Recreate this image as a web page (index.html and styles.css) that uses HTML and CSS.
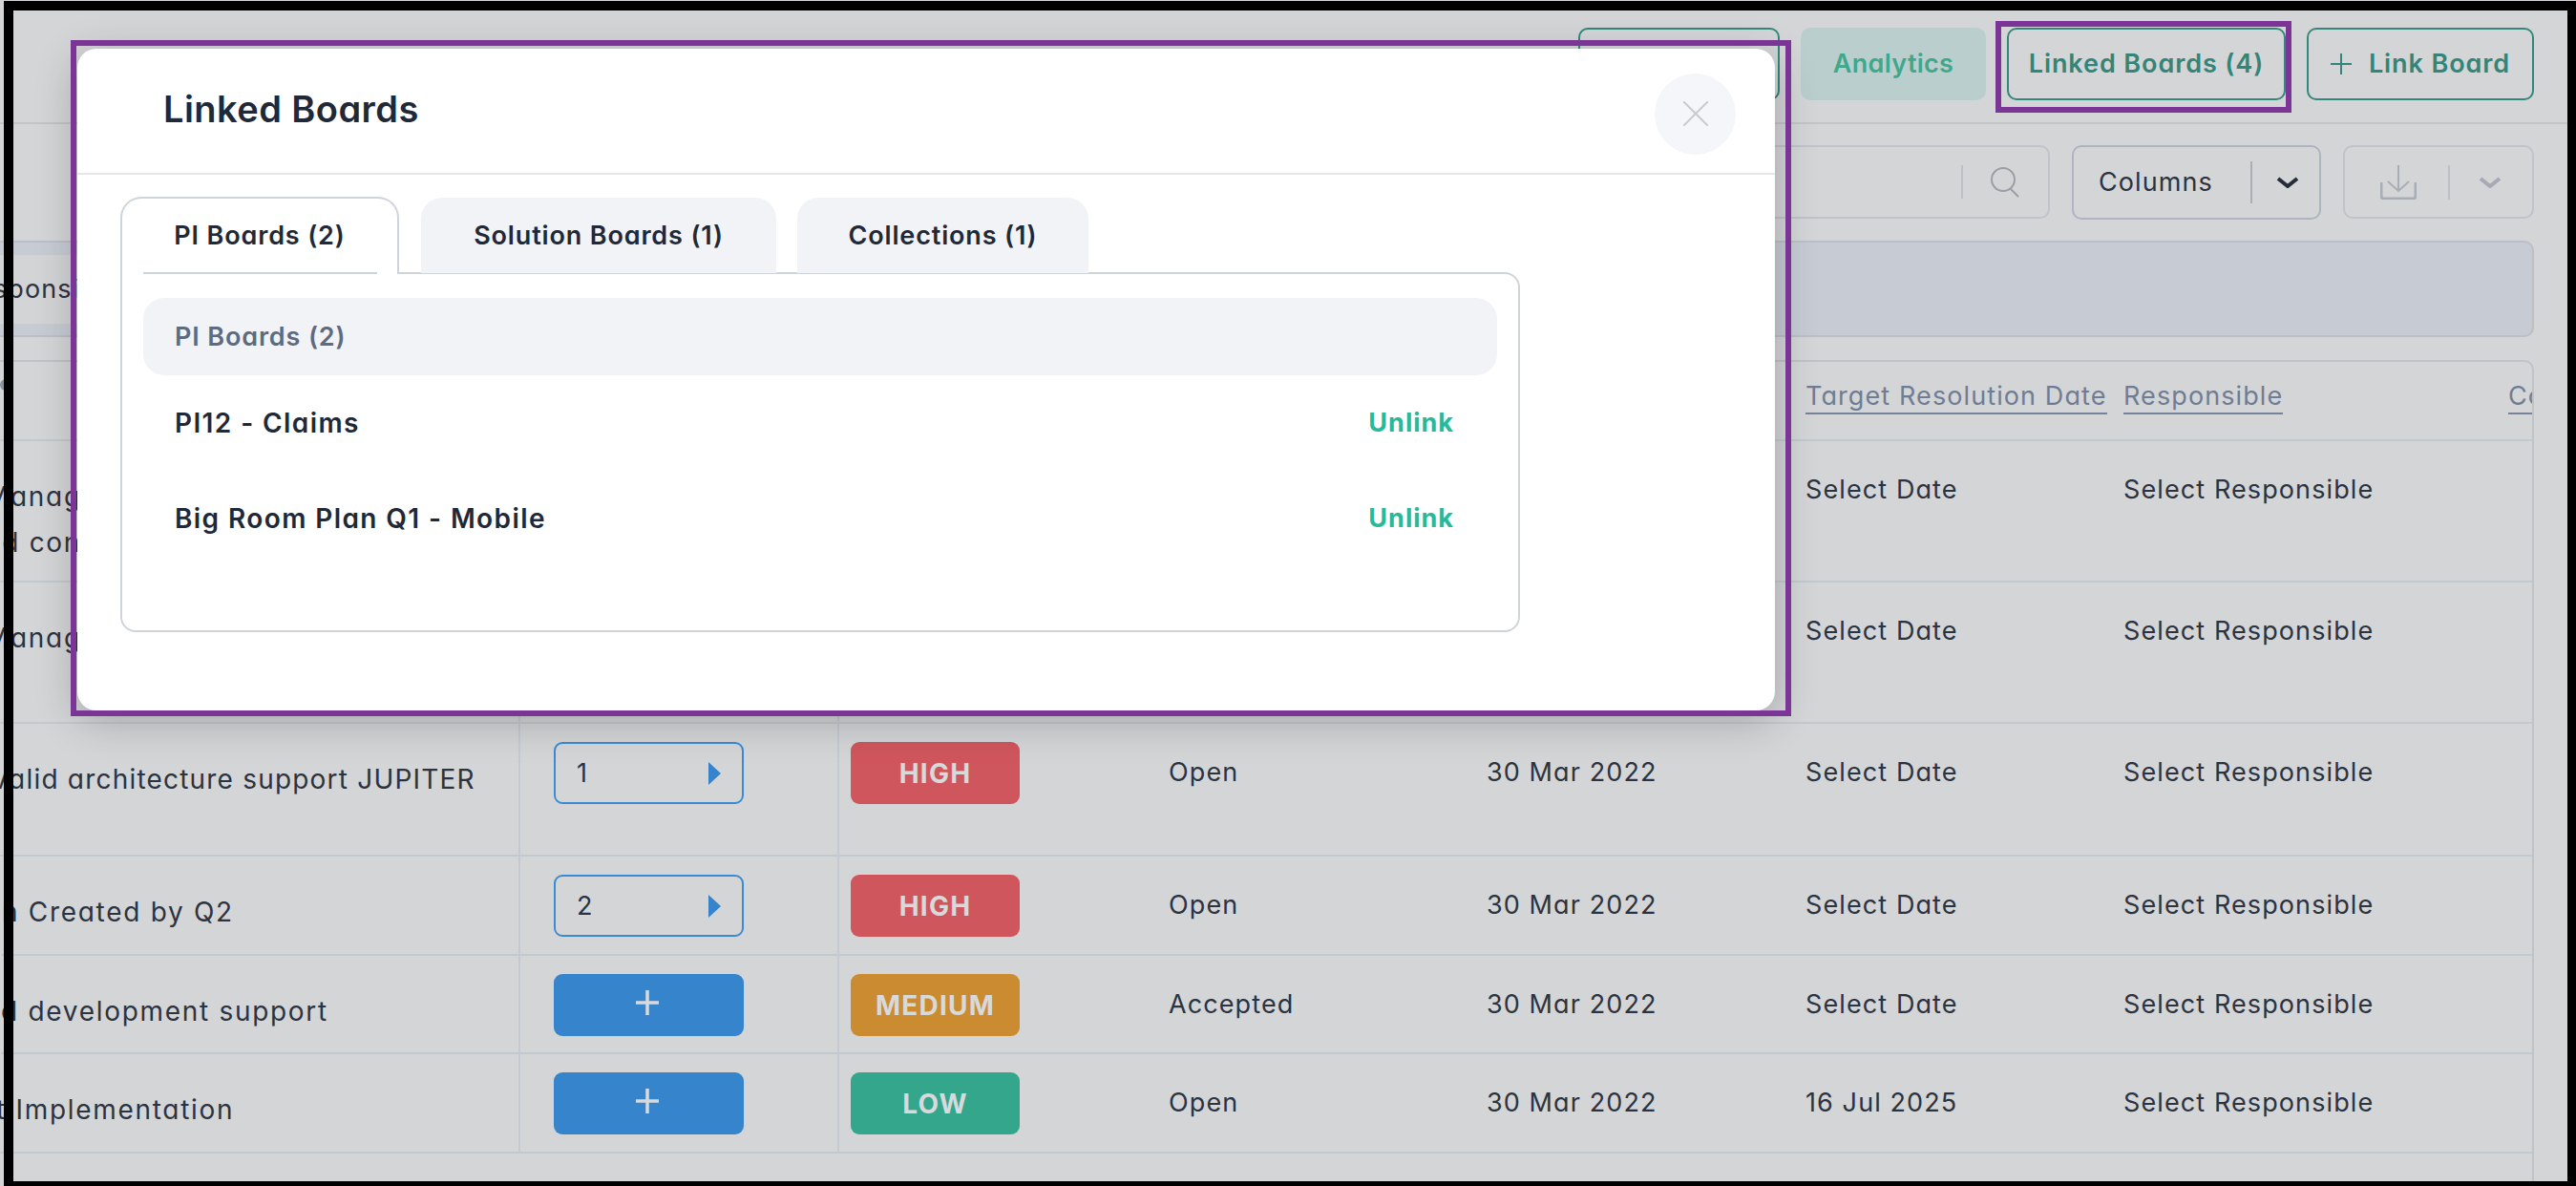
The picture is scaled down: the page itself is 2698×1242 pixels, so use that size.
FILE: index.html
```html
<!DOCTYPE html>
<html lang="en">
<head>
<meta charset="utf-8">
<title>Linked Boards</title>
<link rel="stylesheet" href="styles.css">
</head>
<body>
<div class="page">
  <header class="topbar">
    <button class="btn btn-outline btn-plan">Board View</button>
    <button class="btn btn-soft">Analytics</button>
    <button class="btn btn-outline btn-linked">Linked Boards (4)</button>
    <button class="btn btn-outline btn-link"><svg class="plus-icon" viewBox="0 0 22 22"><path d="M11 0v22M0 11h22"/></svg>Link Board</button>
  </header>

  <div class="toolbar">
    <div class="tool search">
      <span class="tool-sep search-sep"></span>
      <svg class="search-icon" viewBox="0 0 34 32"><circle cx="14" cy="13" r="12"/><path d="M22 23l8 8"/></svg>
    </div>
    <div class="tool columns">
      <span class="columns-label">Columns</span>
      <span class="tool-sep columns-sep"></span>
      <svg class="chev chev-dark" viewBox="0 0 24 12"><path d="M2 2l10 8 10-8"/></svg>
    </div>
    <div class="tool export">
      <svg class="export-icon" viewBox="0 0 38 36"><path d="M19 0v27M8 17l11 10 11-10"/><path class="tray" d="M1 18v14q0 3 3 3h30q3 0 3-3V18"/></svg>
      <span class="tool-sep export-sep"></span>
      <svg class="chev chev-grey" viewBox="0 0 24 12"><path d="M2 2l10 8 10-8"/></svg>
    </div>
  </div>

  <div class="filterbar"><span class="chip">Responsible</span></div>

  <section class="table">
    <div class="th"><span class="dot"></span></div><div class="th"></div><div class="th"></div><div class="th"></div><div class="th"></div>
    <div class="th"><a class="sort">Target Resolution Date</a></div><div class="th"><a class="sort">Responsible</a></div><div class="th clip"><a class="sort">Comments</a></div>

    <div class="td first r1">Manage<br>nd controls</div><div class="td ctl"></div><div class="td ctl"></div><div class="td"></div><div class="td"></div><div class="td">Select Date</div><div class="td">Select Responsible</div><div class="td"></div>

    <div class="td first r2">Manage</div><div class="td ctl"></div><div class="td ctl"></div><div class="td"></div><div class="td"></div><div class="td">Select Date</div><div class="td">Select Responsible</div><div class="td"></div>

    <div class="td first r3">Valid architecture support JUPITER</div>
    <div class="td ctl"><div class="step"><span>1</span><i class="tri"></i></div></div>
    <div class="td ctl"><div class="badge high">HIGH</div></div>
    <div class="td">Open</div><div class="td">30 Mar 2022</div><div class="td">Select Date</div><div class="td">Select Responsible</div><div class="td"></div>

    <div class="td first r4">n Created by Q2</div>
    <div class="td ctl"><div class="step"><span>2</span><i class="tri"></i></div></div>
    <div class="td ctl"><div class="badge high">HIGH</div></div>
    <div class="td">Open</div><div class="td">30 Mar 2022</div><div class="td">Select Date</div><div class="td">Select Responsible</div><div class="td"></div>

    <div class="td first r5">d development support</div>
    <div class="td ctl"><div class="add"><svg class="add-icon" viewBox="0 0 24 26"><path d="M12 0v26M0 13h24"/></svg></div></div>
    <div class="td ctl"><div class="badge medium">MEDIUM</div></div>
    <div class="td">Accepted</div><div class="td">30 Mar 2022</div><div class="td">Select Date</div><div class="td">Select Responsible</div><div class="td"></div>

    <div class="td first r6">t Implementation</div>
    <div class="td ctl"><div class="add"><svg class="add-icon" viewBox="0 0 24 26"><path d="M12 0v26M0 13h24"/></svg></div></div>
    <div class="td ctl"><div class="badge low">LOW</div></div>
    <div class="td">Open</div><div class="td">30 Mar 2022</div><div class="td">16 Jul 2025</div><div class="td">Select Responsible</div><div class="td"></div>
  </section>

  <div class="modal">
    <div class="modal-head">
      <h2 class="modal-title">Linked Boards</h2>
      <button class="close" aria-label="Close"><svg viewBox="0 0 26 26"><path d="M0 0l26 26M26 0L0 26"/></svg></button>
    </div>
    <div class="modal-body">
      <div class="tabs">
        <div class="tab tab-active">PI Boards (2)</div>
        <div class="tab tab-solution">Solution Boards (1)</div>
        <div class="tab tab-collections">Collections (1)</div>
      </div>
      <div class="panel">
        <div class="panel-head">PI Boards (2)</div>
        <div class="panel-row"><span>PI12 - Claims</span><a class="unlink">Unlink</a></div>
        <div class="panel-row"><span>Big Room Plan Q1 - Mobile</span><a class="unlink">Unlink</a></div>
      </div>
    </div>
  </div>

  <div class="mark mark-modal"></div>
  <div class="mark mark-button"></div>
  <div class="frame"></div>
</div>
</body>
</html>
```

FILE: styles.css
```css
* { box-sizing: border-box; }
html, body { margin: 0; padding: 0; }
body { background: #d4d5d7; }
.page {
  position: relative;
  width: 2698px;
  height: 1242px;
  overflow: hidden;
  background: #d4d5d7;
  color: #2c3340;
  font-family: Inter, "Liberation Sans", sans-serif;
  font-feature-settings: "cv11" 1;
  font-size: 27px;
  letter-spacing: 1.1px;
  line-height: 36px;
}

/* top bar */
.topbar {
  display: flex;
  justify-content: flex-end;
  gap: 22px;
  height: 130px;
  padding: 29px 44px 0 0;
  border-bottom: 2px solid #c2c4c8;
}
.btn {
  display: flex;
  align-items: center;
  justify-content: center;
  height: 76px;
  border-radius: 10px;
  font: inherit;
  font-weight: 600;
  letter-spacing: .9px;
  background: transparent;
}
.btn-outline { border: 2px solid #34877a; color: #328578; }
.btn-soft { width: 194px; border: 0; background: #bacfcd; color: #3fa88c; letter-spacing: .3px; }
.btn-plan { width: 211px; }
.btn-linked { width: 292px; }
.btn-link { width: 238px; }
.plus-icon { width: 22px; height: 22px; margin-right: 18px; fill: none; stroke: #328578; stroke-width: 2; }

/* toolbar */
.toolbar {
  display: flex;
  justify-content: flex-end;
  gap: 23px;
  padding: 22px 44px 0 0;
}
.tool {
  display: flex;
  align-items: center;
  height: 77px;
  border: 2px solid #bfc3ca;
  border-radius: 10px;
}
.tool-sep { width: 2px; background: #bdc0c6; }
.search { width: 500px; justify-content: flex-end; padding-right: 27px; }
.search-sep { height: 35px; margin-right: 28px; }
.search-icon { width: 34px; height: 32px; fill: none; stroke: #9b9ea4; stroke-width: 2; }
.columns { width: 261px; height: 78px; padding-left: 26px; border-color: #aeb4c0; }
.columns-label { width: 159px; }
.columns-sep { height: 44px; background: #a9aeb8; margin-right: 25px; }
.chev { width: 24px; height: 12px; fill: none; stroke-width: 4; }
.chev-dark { stroke: #262c3a; }
.chev-grey { stroke: #a6aab2; margin-left: 30px; }
.export { width: 200px; padding-left: 37px; }
.export-icon { width: 38px; height: 36px; fill: none; stroke: #a9aeb6; stroke-width: 2; }
.export-icon .tray { stroke-width: 3; }
.export-sep { height: 36px; margin-left: 33px; }

/* filter bar */
.filterbar {
  display: flex;
  align-items: center;
  height: 101px;
  margin: 22px 44px 0 -10px;
  background: #c7cbd3;
  border: 2px solid #bcbfc6;
  border-radius: 10px;
}
.chip {
  display: flex;
  align-items: center;
  height: 72px;
  margin-left: -58px;
  padding: 0 24px;
  background: #d3d4d6;
  color: #2c3340;
}

/* table */
.table {
  display: grid;
  grid-template-columns: 545px 334px 333px 333px 334px 333px 403px 1fr;
  grid-template-rows: 83px 148px 148px 139px 104px 103px 104px 60px;
  height: 890px;
  margin: 24px 44px 0 0;
  border: solid #bfc2c7;
  border-width: 2px 2px 0 0;
  border-top-right-radius: 10px;
}
.th, .td {
  border-bottom: 2px solid #c2c9ce;
  padding: 33px 12px 0;
  white-space: nowrap;
}
.th { padding-top: 18px; }
.clip { overflow: hidden; padding-right: 0; padding-left: 12px; }
.sort { color: #6f7d94; border-bottom: 2px solid #76839a; display: inline-block; line-height: 34px; }
.dot { display: block; width: 12px; height: 12px; margin: 0 0 0 -12px; border-radius: 50%; background: #8b93a3; }
.td:nth-child(8n+1), .td:nth-child(8n+2) { border-right: 2px solid #c4cacf; }
.first { padding: 34px 0 0; font-size: 28px; letter-spacing: 1.7px; line-height: 48px; overflow: hidden; }
.r1, .r2 { margin-left: -16px; }
.r3 { margin-left: -10px; letter-spacing: 1.2px; }
.r4 { margin-left: 2px; }
.r5 { margin-left: 1px; }
.r6 { margin-left: -4px; }
.ctl { padding-top: 19px; }
.td:nth-child(8n+2).ctl { padding-left: 35px; }
.step, .add, .badge { height: 65px; border-radius: 9px; }
.step, .add { width: 199px; }
.step {
  display: flex;
  align-items: center;
  justify-content: space-between;
  padding: 0 22px;
  border: 2px solid #3a8bd4;
}
.tri {
  width: 0;
  height: 0;
  border-left: 13px solid #3584cc;
  border-top: 12px solid transparent;
  border-bottom: 12px solid transparent;
}
.add { display: flex; justify-content: center; align-items: flex-start; padding: 17px 3px 0 0; background: #3584cc; }
.add-icon { width: 24px; height: 26px; fill: none; stroke: #d8d9db; stroke-width: 3.5; }
.badge {
  display: flex;
  align-items: center;
  justify-content: center;
  width: 177px;
  color: #d8d9db;
  font-weight: 700;
  font-size: 28px;
  letter-spacing: 1.2px;
}
.high { background: #d0565d; }
.medium { background: #cb8b31; }
.low { background: #34a68b; }

/* modal */
.modal {
  position: absolute;
  left: 81px;
  top: 51px;
  width: 1778px;
  height: 693px;
  background: #fff;
  border-radius: 20px;
  box-shadow: 0 10px 45px rgba(0, 0, 0, .24);
  color: #1f2937;
  letter-spacing: .85px;
}
.modal-head {
  display: flex;
  align-items: center;
  justify-content: space-between;
  height: 132px;
  padding: 0 41px 0 90px;
  border-bottom: 2px solid #e5e6e8;
}
.modal-title { margin: 0 0 4px; font-size: 38px; font-weight: 600; letter-spacing: .45px; line-height: 44px; }
.close {
  display: flex;
  align-items: center;
  justify-content: center;
  width: 85px;
  height: 85px;
  margin-top: 6px;
  padding: 0;
  border: 0;
  border-radius: 50%;
  background: #f5f6fa;
}
.close svg { width: 26px; height: 26px; fill: none; stroke: #c9cbd1; stroke-width: 2; }
.modal-body { padding: 23px 0 0 45px; }
.tabs { display: flex; gap: 23px; position: relative; z-index: 1; margin-bottom: -2px; }
.tab {
  display: flex;
  align-items: center;
  justify-content: center;
  height: 81px;
  border-radius: 22px 22px 0 0;
  background: #f2f3f7;
  font-weight: 600;
}
.tab-active {
  position: relative;
  width: 292px;
  padding-bottom: 2px;
  background: #fff;
  border: solid #cfd4db;
  border-width: 2px 2px 0;
}
.tab-active::after {
  content: "";
  position: absolute;
  left: 22px;
  right: 21px;
  bottom: 0;
  height: 2px;
  background: #cfd4db;
}
.tab-solution { width: 372px; height: 79px; margin-top: 1px; padding-bottom: 0; }
.tab-collections { width: 305px; height: 79px; margin: 1px 0 0 -1px; }
.panel {
  width: 1466px;
  height: 377px;
  padding: 25px 22px 0;
  border: 2px solid #cfd4db;
  border-radius: 0 16px 16px 16px;
}
.panel-head {
  display: flex;
  align-items: center;
  height: 81px;
  padding-left: 33px;
  border-radius: 22px;
  background: #f2f3f7;
  color: #5e6b7f;
  font-weight: 600;
}
.panel-row {
  display: flex;
  align-items: center;
  justify-content: space-between;
  height: 100px;
  padding: 0 45px 0 33px;
  font-size: 28px;
  font-weight: 600;
  letter-spacing: 1.4px;
}
.unlink { color: #26b99a; font-size: 27px; font-weight: 700; letter-spacing: 1px; }

/* annotations */
.mark { position: absolute; border: 6px solid #7a3597; }
.mark-modal { left: 74px; top: 42px; width: 1802px; height: 708px; }
.mark-button { left: 2090px; top: 22px; width: 310px; height: 96px; }
.frame {
  position: absolute;
  left: 4px;
  top: 1px;
  width: 2694px;
  height: 1241px;
  border: solid #000;
  border-width: 10px 9px 5px 10px;
}
```
